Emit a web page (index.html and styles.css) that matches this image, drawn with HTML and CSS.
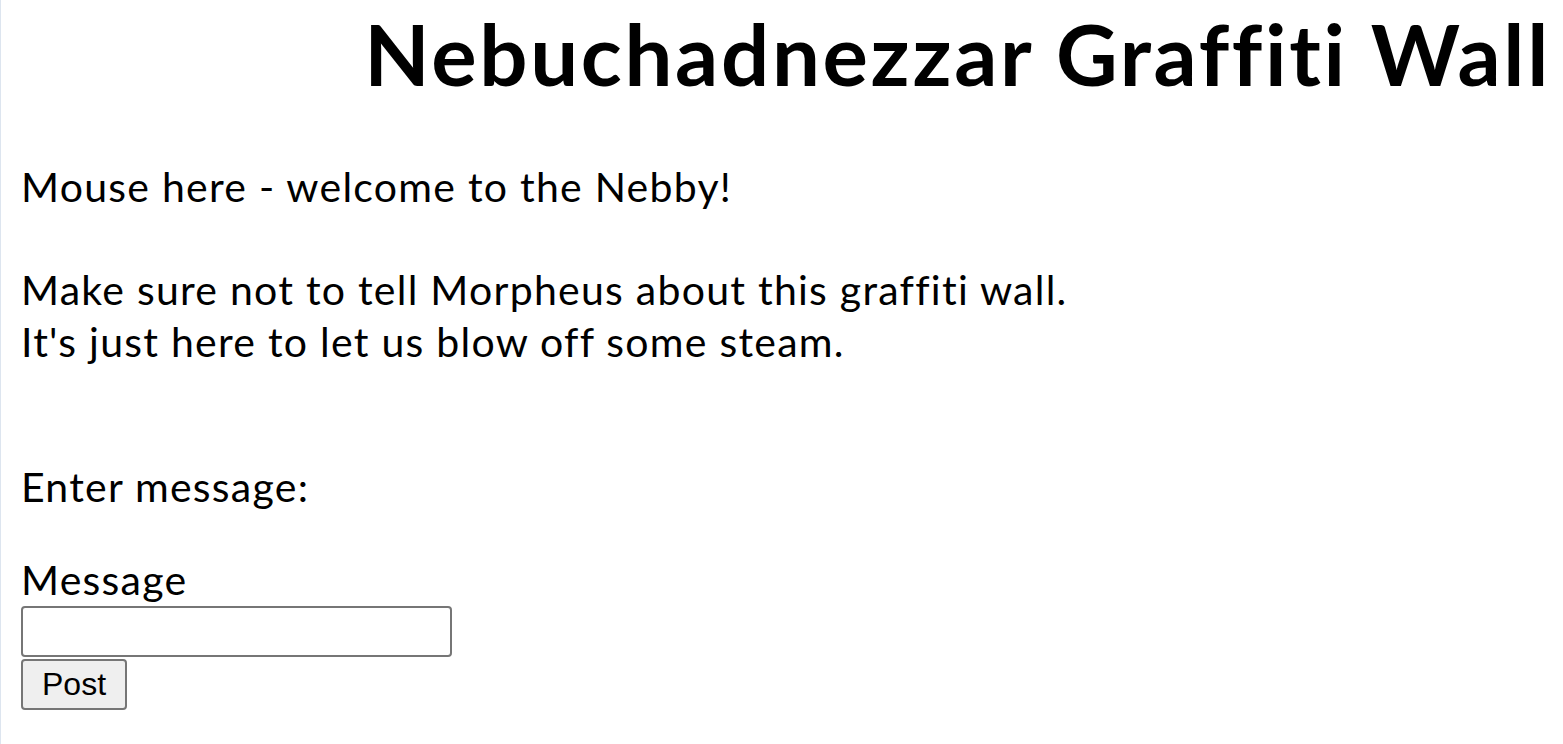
FILE: index.html
```html
<!DOCTYPE html>
<html lang="en">
<head>
<meta charset="utf-8">
<title>Nebuchadnezzar Graffiti Wall</title>
<link rel="stylesheet" href="styles.css">
</head>
<body>
<h1 class="title">Nebuchadnezzar Graffiti Wall</h1>
<p class="intro">Mouse here - welcome to the Nebby!<br><br>Make sure not to tell Morpheus about this graffiti wall.<br>It's just here to let us blow off some steam.</p>
<p class="prompt">Enter message:</p>
<form class="post-form" onsubmit="return false;">
  <label class="field-label" for="msg">Message</label>
  <input class="field-input" id="msg" type="text">
  <button class="post-btn" type="submit">Post</button>
</form>
</body>
</html>
```

FILE: styles.css
```css
html {
  margin: 0;
  padding: 0;
  background: #ffffff;
  border-left: 1px solid #dde5ef;
  min-height: 100%;
}

body {
  margin: 0;
  padding: 0 19px 0 20px;
  font-family: Lato, "Open Sans", sans-serif;
  font-size: 41px;
  letter-spacing: 1.25px;
  font-variant-ligatures: none;
  line-height: 51.5px;
  color: #000000;
}

.title {
  margin: 3px -7px 0 0;
  font-family: Lato, "Open Sans", sans-serif;
  font-weight: 700;
  font-size: 85px;
  letter-spacing: 2.7px;
  font-variant-ligatures: none;
  line-height: 100px;
  text-align: right;
}

.intro {
  margin: 58px 0 0 0;
}

.prompt {
  margin: 94px 0 0 0;
}

.post-form {
  margin: 41.5px 0 0 0;
  display: flex;
  flex-direction: column;
  align-items: flex-start;
}

.field-label {
  display: block;
}

.field-input {
  box-sizing: border-box;
  width: 431px;
  height: 51px;
  margin: 0.7px 0 0 0;
  border: 2px solid #767676;
  border-radius: 4px;
  background: #ffffff;
  padding: 0 4px;
  font-size: 32px;
  letter-spacing: normal;
}

.post-btn {
  box-sizing: border-box;
  width: 106px;
  height: 51px;
  margin: 2px 0 0 0;
  border: 2px solid #767676;
  border-radius: 4px;
  background: #efefef;
  color: #000000;
  font-family: "Liberation Sans", Arial, sans-serif;
  font-size: 32px;
  letter-spacing: normal;
  padding: 0;
}
```
